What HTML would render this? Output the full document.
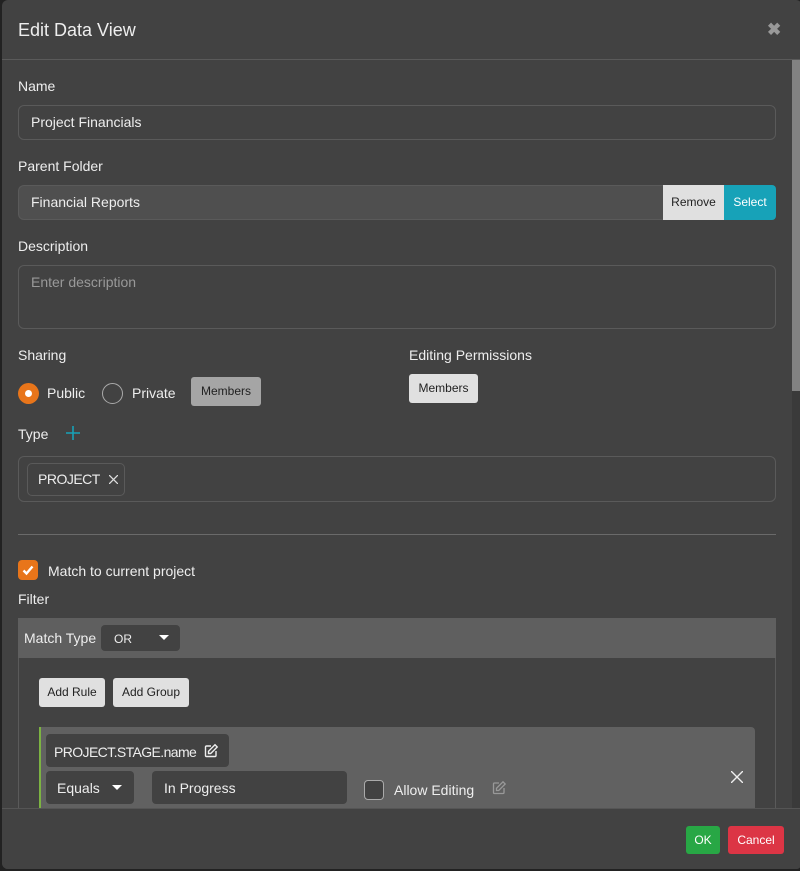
<!DOCTYPE html>
<html><head><style>
*{box-sizing:border-box;margin:0;padding:0}
body{width:800px;height:871px;background:#222;font-family:"Liberation Sans",sans-serif;font-size:14px;color:#eee;position:relative;overflow:hidden}
.dlg{position:absolute;left:2px;top:0px;width:800px;height:869px;background:#424242;border-radius:6px;overflow:hidden}
.a{position:absolute}
.lbl{font-size:14px;color:#eee}
.inp{border:1px solid #5a5a5a;border-radius:6px;background:#424242}
.btn{background:#e0e0e0;color:#222;font-size:12px;border-radius:3px;text-align:center}
</style></head><body>
<div class="dlg">
<div class="a" style="left:16px;top:20px;font-size:18px;color:#eee">Edit Data View</div>
<div class="a" style="left:765px;top:20px;font-size:17px;color:#999;font-weight:bold">✖</div>
<div class="a" style="left:0;top:59px;width:800px;height:1px;background:#5a5a5a"></div>
<div class="a" style="left:790px;top:60px;width:8px;height:331px;background:#828282"></div>
<div class="a" style="left:790px;top:391px;width:8px;height:417px;background:#3a3a3a"></div>

<div class="a lbl" style="left:16px;top:78px">Name</div>
<div class="a inp" style="left:16px;top:105px;width:758px;height:35px"></div>
<div class="a" style="left:29px;top:114px">Project Financials</div>
<div class="a lbl" style="left:16px;top:158px">Parent Folder</div>
<div class="a" style="left:16px;top:185px;width:646px;height:35px;background:#4f4f4f;border:1px solid #5a5a5a;border-right:none;border-radius:6px 0 0 6px"></div>
<div class="a" style="left:29px;top:194px">Financial Reports</div>
<div class="a" style="left:661px;top:185px;width:61px;height:35px;background:#e0e0e0;color:#222;font-size:12px;text-align:center;line-height:35px">Remove</div>
<div class="a" style="left:722px;top:185px;width:52px;height:35px;background:#17a2b8;color:#fff;font-size:12px;text-align:center;line-height:35px;border-radius:0 4px 4px 0">Select</div>
<div class="a lbl" style="left:16px;top:238px">Description</div>
<div class="a inp" style="left:16px;top:265px;width:758px;height:64px"></div>
<div class="a" style="left:29px;top:274px;color:#999">Enter description</div>

<div class="a lbl" style="left:16px;top:347px">Sharing</div>
<div class="a" style="left:16px;top:383px;width:21px;height:21px;border-radius:50%;background:#e8751a"></div>
<div class="a" style="left:23px;top:390px;width:7px;height:7px;border-radius:50%;background:#fff"></div>
<div class="a" style="left:45px;top:385px">Public</div>
<div class="a" style="left:100px;top:383px;width:21px;height:21px;border-radius:50%;border:1px solid #aaa"></div>
<div class="a" style="left:130px;top:385px">Private</div>
<div class="a" style="left:189px;top:377px;width:70px;height:29px;background:#a5a5a5;color:#222;font-size:12px;border-radius:3px;text-align:center;line-height:29px">Members</div>
<div class="a lbl" style="left:407px;top:347px">Editing Permissions</div>
<div class="a btn" style="left:407px;top:374px;width:69px;height:29px;line-height:29px">Members</div>

<div class="a lbl" style="left:16px;top:426px">Type</div>
<svg class="a" style="left:64px;top:426px" width="14" height="14"><path d="M7 0v14M0 7h14" stroke="#17a2b8" stroke-width="1.6"/></svg>
<div class="a inp" style="left:16px;top:456px;width:758px;height:46px"></div>
<div class="a" style="left:25px;top:463px;width:98px;height:33px;border:1px solid #5a5a5a;border-radius:5px"></div>
<div class="a" style="left:36px;top:471px;letter-spacing:-0.5px">PROJECT</div>
<svg class="a" style="left:107px;top:475px" width="9" height="9"><path d="M0 0l9 9M9 0L0 9" stroke="#ddd" stroke-width="1.3"/></svg>
<div class="a" style="left:16px;top:534px;width:758px;height:1px;background:#6a6a6a"></div>

<div class="a" style="left:16px;top:560px;width:20px;height:20px;border-radius:4px;background:#e8751a"></div>
<svg class="a" style="left:16px;top:560px" width="20" height="20"><path d="M5.5 10.5l3 3 6-7" stroke="#fff" stroke-width="2.4" fill="none"/></svg>
<div class="a" style="left:46px;top:563px">Match to current project</div>
<div class="a lbl" style="left:16px;top:591px">Filter</div>
<div class="a" style="left:16px;top:618px;width:758px;height:40px;background:#5f5f5f"></div>
<div class="a" style="left:22px;top:630px">Match Type</div>
<div class="a" style="left:99px;top:625px;width:79px;height:26px;background:#424242;border-radius:4px"></div>
<div class="a" style="left:112px;top:632px;font-size:12px">OR</div>
<div class="a" style="left:157px;top:635px;width:0;height:0;border-left:5px solid transparent;border-right:5px solid transparent;border-top:5px solid #fff"></div>
<div class="a" style="left:16px;top:658px;width:758px;height:160px;border:1px solid #5a5a5a;border-top:none;background:#424242"></div>
<div class="a btn" style="left:37px;top:678px;width:66px;height:29px;line-height:29px">Add Rule</div>
<div class="a btn" style="left:111px;top:678px;width:76px;height:29px;line-height:29px">Add Group</div>
<div class="a" style="left:37px;top:727px;width:716px;height:90px;background:#616161;border-left:2px solid #7cb342;border-radius:0 4px 0 0"></div>
<div class="a" style="left:44px;top:734px;width:183px;height:33px;background:#424242;border-radius:4px"></div>
<div class="a" style="left:52px;top:744px;letter-spacing:-0.6px">PROJECT.STAGE.name</div>
<svg class="a" style="left:201px;top:743px" width="16" height="16" viewBox="0 0 16 16" fill="none" stroke="#eee" stroke-width="1.4"><path d="M8 3H3.5a1 1 0 0 0-1 1v8.5a1 1 0 0 0 1 1H12a1 1 0 0 0 1-1V8"/><path d="M12 1.8l2.2 2.2-6.5 6.5H5.5V8.3z"/></svg>
<div class="a" style="left:44px;top:771px;width:88px;height:33px;background:#424242;border-radius:4px"></div>
<div class="a" style="left:55px;top:780px">Equals</div>
<div class="a" style="left:110px;top:785px;width:0;height:0;border-left:5px solid transparent;border-right:5px solid transparent;border-top:5px solid #fff"></div>
<div class="a" style="left:150px;top:771px;width:195px;height:33px;background:#424242;border-radius:4px"></div>
<div class="a" style="left:162px;top:780px">In Progress</div>
<div class="a" style="left:362px;top:780px;width:20px;height:20px;border:1px solid #aaa;border-radius:4px;background:#424242"></div>
<div class="a" style="left:392px;top:782px">Allow Editing</div>
<svg class="a" style="left:489px;top:780px" width="16" height="16" viewBox="0 0 16 16" fill="none" stroke="#999" stroke-width="1.3"><path d="M8 3H3.5a1 1 0 0 0-1 1v8.5a1 1 0 0 0 1 1H12a1 1 0 0 0 1-1V8"/><path d="M12 1.8l2.2 2.2-6.5 6.5H5.5V8.3z"/></svg>
<svg class="a" style="left:729px;top:771px" width="12" height="12"><path d="M0 0l12 12M12 0L0 12" stroke="#eee" stroke-width="1.4"/></svg>

<div class="a" style="left:0;top:808px;width:800px;height:62px;background:#424242;border-top:1px solid #555"></div>
<div class="a" style="left:684px;top:826px;width:34px;height:28px;background:#28a745;color:#fff;font-size:12px;text-align:center;line-height:28px;border-radius:3px">OK</div>
<div class="a" style="left:726px;top:826px;width:56px;height:28px;background:#dc3545;color:#fff;font-size:12px;text-align:center;line-height:28px;border-radius:3px">Cancel</div>
</div>
</body></html>
